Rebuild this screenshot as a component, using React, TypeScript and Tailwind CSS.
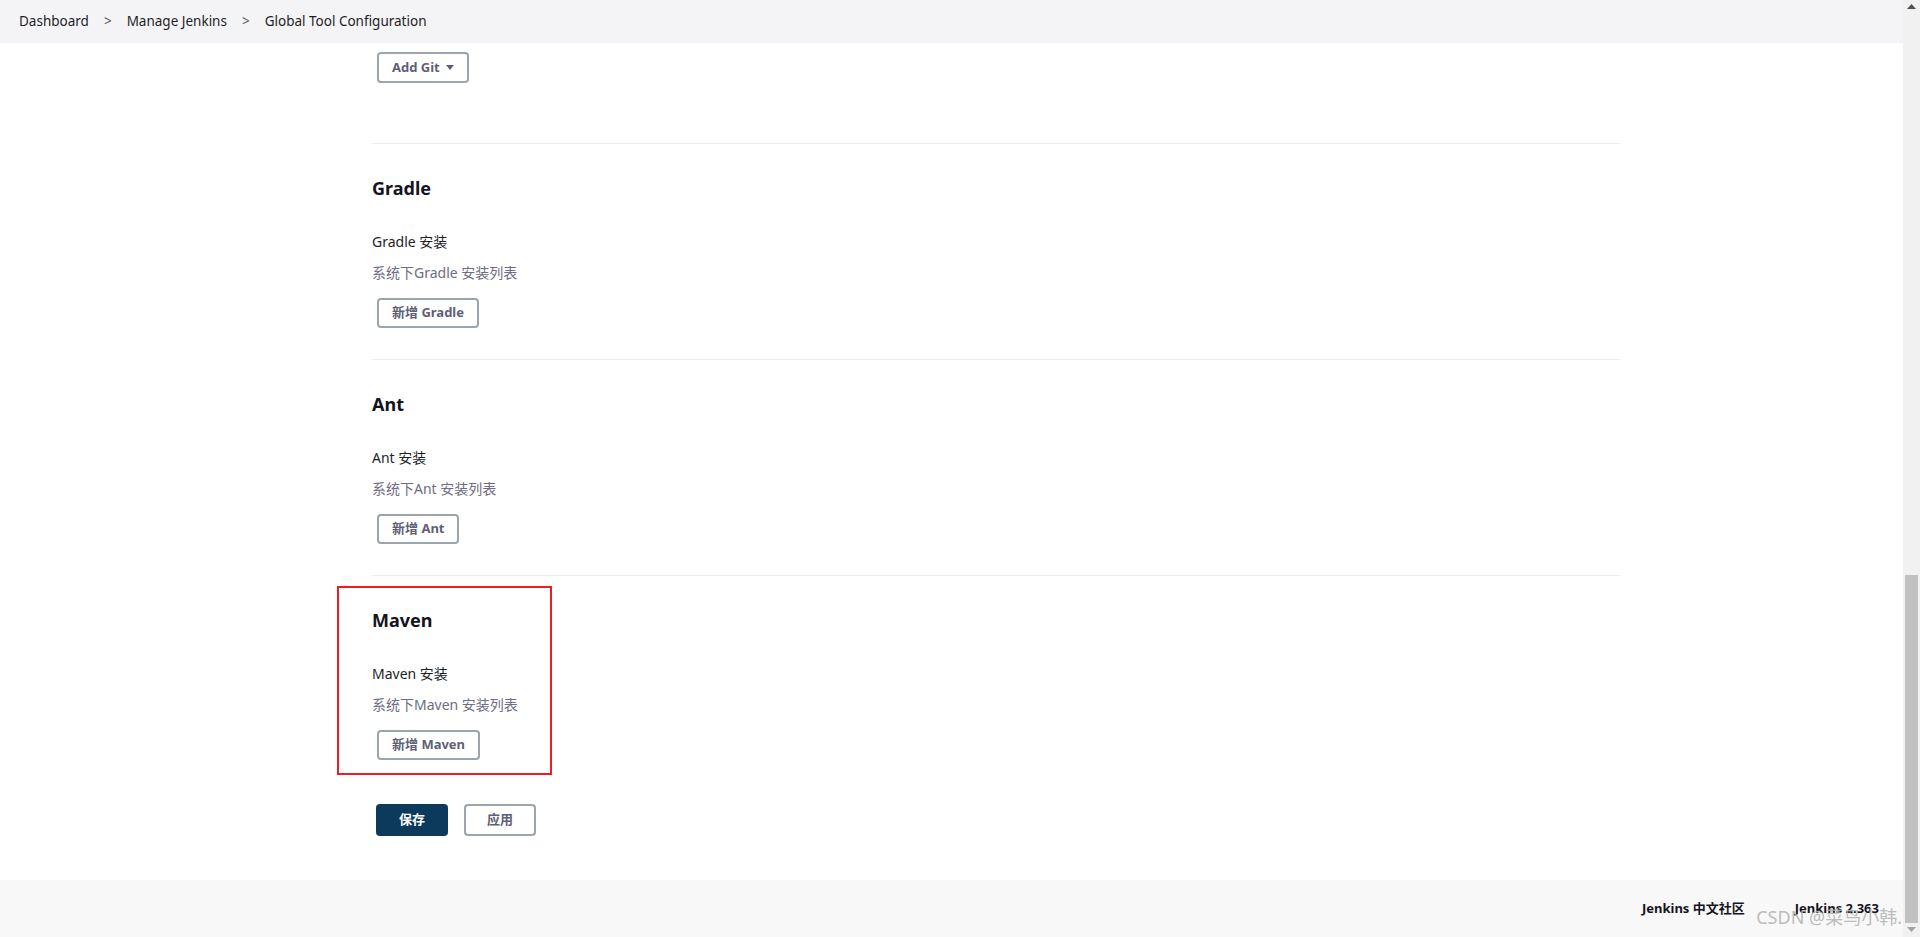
import React from "react";

const font = {
  fontFamily: '"Noto Sans", "Noto Sans CJK SC", sans-serif',
};

function ToolSection({
  name,
  highlight,
}: {
  name: string;
  highlight?: boolean;
}) {
  return (
    <section className="relative border-t border-[#ececf0] pt-[32px] pb-[31px]">
      {highlight && (
        <div className="pointer-events-none absolute left-[-35px] top-[10px] h-[189px] w-[215px] border-2 border-[#ee1c25]" />
      )}
      <h2 className="h-6 text-[18px] font-bold leading-6 text-[#14141f]">
        {name}
      </h2>
      <div className="mt-[32px] text-[14px] leading-5 text-[#1e1e28]">
        {name} 安装
      </div>
      <div className="mt-[11px] text-[14px] leading-5 text-[#6e6d82]">
        系统下{name} 安装列表
      </div>
      <div className="mt-[15px] pl-[5px]">
        <button className="h-[30px] rounded-[4px] border-2 border-[#9ba5ae] bg-white px-[13px] text-[13px] font-bold text-[#5f5e77]">
          新增 {name}
        </button>
      </div>
    </section>
  );
}

export default function App() {
  return (
    <div className="relative flex h-[937px] w-full overflow-hidden bg-white" style={font}>
      <div className="flex min-w-0 flex-1 flex-col">
        {/* Breadcrumb bar */}
        <header className="flex h-[43px] shrink-0 items-center bg-[#f4f4f6] pl-[19px] text-[13.5px] text-[#1e1e28]">
          <span>Dashboard</span>
          <span className="mx-[15px] text-[#555]">&gt;</span>
          <span>Manage Jenkins</span>
          <span className="mx-[15px] text-[#555]">&gt;</span>
          <span>Global Tool Configuration</span>
        </header>

        <main className="flex-1 pl-[372px]">
          <div className="w-[1248px]">
            <div className="pb-[60px] pt-[9px] pl-[5px]">
              <button className="flex h-[31px] items-center gap-[6px] rounded-[4px] border-2 border-[#9ba5ae] bg-white px-[13px] text-[13px] font-bold text-[#5f5e77]">
                Add Git
                <svg width="8" height="5" viewBox="0 0 8 5">
                  <path d="M0 0h8L4 5z" fill="#5f5e77" />
                </svg>
              </button>
            </div>

            <ToolSection name="Gradle" />
            <ToolSection name="Ant" />
            <ToolSection name="Maven" highlight />

            <div className="flex gap-[16px] pl-[4px] pt-[13px]">
              <button className="h-[32px] w-[72px] rounded-[4px] bg-[#0b3a5c] text-[13px] font-bold text-white">
                保存
              </button>
              <button className="h-[32px] w-[72px] rounded-[4px] border-2 border-[#9ba5ae] bg-white text-[13px] font-bold text-[#5f5e77]">
                应用
              </button>
            </div>
          </div>
        </main>

        {/* Footer */}
        <footer className="flex h-[57px] shrink-0 items-start justify-end gap-[50px] bg-[#f8f8f8] pr-[24px] pt-[19px] text-[13px] font-bold text-[#14141f]">
          <span>Jenkins 中文社区</span>
          <span>Jenkins 2.363</span>
        </footer>
      </div>

      {/* Scrollbar */}
      <div className="flex w-[17px] shrink-0 flex-col items-center bg-[#f1f1f1]">
        <svg className="mt-[4px]" width="9" height="5" viewBox="0 0 9 5">
          <path d="M0 5L4.5 0L9 5z" fill="#505050" />
        </svg>
        <div className="flex-1" />
        <div className="h-[348px] w-[13px] bg-[#c1c1c1]" />
        <svg className="mb-[5px] mt-[4px]" width="9" height="5" viewBox="0 0 9 5">
          <path d="M0 0L9 0L4.5 5z" fill="#a3a3a3" />
        </svg>
      </div>

      {/* watermark */}
      <div className="pointer-events-none absolute bottom-[8px] right-[18px] z-20 whitespace-nowrap text-[18px] leading-6 text-[#b4b4b4]/90">
        CSDN @菜鸟小韩.
      </div>
    </div>
  );
}
